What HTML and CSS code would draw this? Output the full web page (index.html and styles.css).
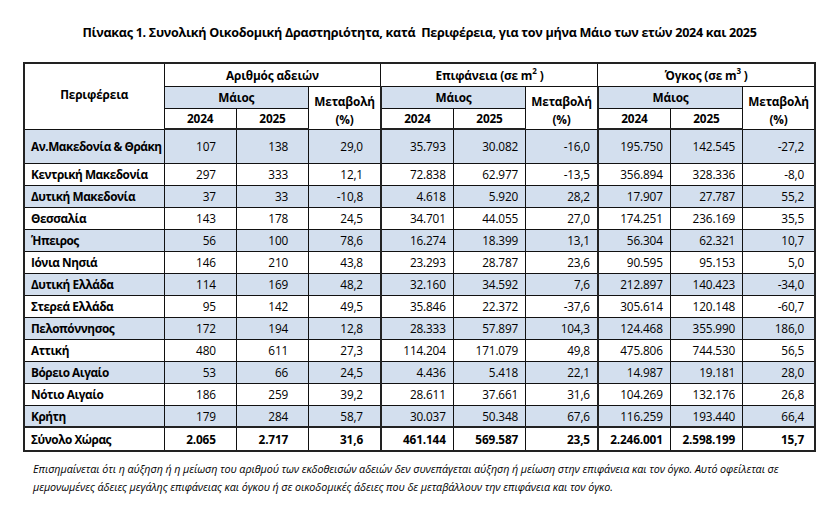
FILE: index.html
```html
<!DOCTYPE html>
<html lang="el">
<head>
<meta charset="utf-8">
<link rel="stylesheet" href="styles.css">
</head>
<body>
<div class="page">
  <h1 class="title">Πίνακας 1. Συνολική Οικοδομική Δραστηριότητα, κατά&nbsp; Περιφέρεια, για τον μήνα Μάιο των ετών 2024 και 2025</h1>
  <table class="data">
    <colgroup>
      <col class="c-reg"><col class="c-n"><col class="c-n"><col class="c-n"><col class="c-n"><col class="c-n"><col class="c-n"><col class="c-n"><col class="c-n"><col class="c-n">
    </colgroup>
    <thead>
      <tr class="h1">
        <th rowspan="3" class="reg-h">Περιφέρεια</th>
        <th colspan="3" class="grp">Αριθμός αδειών</th>
        <th colspan="3" class="grp">Επιφάνεια (σε m<sup>2</sup> )</th>
        <th colspan="3" class="grp">Όγκος (σε m<sup>3</sup> )</th>
      </tr>
      <tr class="h2">
        <th colspan="2" class="blue">Μάιος</th>
        <th rowspan="2" class="chg grp-r">Μεταβολή<br>(%)</th>
        <th colspan="2" class="blue">Μάιος</th>
        <th rowspan="2" class="chg grp-r">Μεταβολή<br>(%)</th>
        <th colspan="2" class="blue">Μάιος</th>
        <th rowspan="2" class="chg">Μεταβολή<br>(%)</th>
      </tr>
      <tr class="h3">
        <th>2024</th><th>2025</th>
        <th>2024</th><th>2025</th>
        <th>2024</th><th>2025</th>
      </tr>
    </thead>
    <tbody>
      <tr class="blue first"><th>Αν.Μακεδονία &amp; Θράκη</th><td class="a">107</td><td class="a">138</td><td class="p grp-r">29,0</td><td>35.793</td><td>30.082</td><td class="grp-r">-16,0</td><td>195.750</td><td>142.545</td><td class="l">-27,2</td></tr>
      <tr><th>Κεντρική Μακεδονία</th><td class="a">297</td><td class="a">333</td><td class="p grp-r">12,1</td><td>72.838</td><td>62.977</td><td class="grp-r">-13,5</td><td>356.894</td><td>328.336</td><td class="l">-8,0</td></tr>
      <tr class="blue"><th>Δυτική Μακεδονία</th><td class="a">37</td><td class="a">33</td><td class="p grp-r">-10,8</td><td>4.618</td><td>5.920</td><td class="grp-r">28,2</td><td>17.907</td><td>27.787</td><td class="l">55,2</td></tr>
      <tr><th>Θεσσαλία</th><td class="a">143</td><td class="a">178</td><td class="p grp-r">24,5</td><td>34.701</td><td>44.055</td><td class="grp-r">27,0</td><td>174.251</td><td>236.169</td><td class="l">35,5</td></tr>
      <tr class="blue"><th>Ήπειρος</th><td class="a">56</td><td class="a">100</td><td class="p grp-r">78,6</td><td>16.274</td><td>18.399</td><td class="grp-r">13,1</td><td>56.304</td><td>62.321</td><td class="l">10,7</td></tr>
      <tr><th>Ιόνια Νησιά</th><td class="a">146</td><td class="a">210</td><td class="p grp-r">43,8</td><td>23.293</td><td>28.787</td><td class="grp-r">23,6</td><td>90.595</td><td>95.153</td><td class="l">5,0</td></tr>
      <tr class="blue"><th>Δυτική Ελλάδα</th><td class="a">114</td><td class="a">169</td><td class="p grp-r">48,2</td><td>32.160</td><td>34.592</td><td class="grp-r">7,6</td><td>212.897</td><td>140.423</td><td class="l">-34,0</td></tr>
      <tr><th>Στερεά Ελλάδα</th><td class="a">95</td><td class="a">142</td><td class="p grp-r">49,5</td><td>35.846</td><td>22.372</td><td class="grp-r">-37,6</td><td>305.614</td><td>120.148</td><td class="l">-60,7</td></tr>
      <tr class="blue"><th>Πελοπόννησος</th><td class="a">172</td><td class="a">194</td><td class="p grp-r">12,8</td><td>28.333</td><td>57.897</td><td class="grp-r">104,3</td><td>124.468</td><td>355.990</td><td class="l">186,0</td></tr>
      <tr><th>Αττική</th><td class="a">480</td><td class="a">611</td><td class="p grp-r">27,3</td><td>114.204</td><td>171.079</td><td class="grp-r">49,8</td><td>475.806</td><td>744.530</td><td class="l">56,5</td></tr>
      <tr class="blue"><th>Βόρειο Αιγαίο</th><td class="a">53</td><td class="a">66</td><td class="p grp-r">24,5</td><td>4.436</td><td>5.418</td><td class="grp-r">22,1</td><td>14.987</td><td>19.181</td><td class="l">28,0</td></tr>
      <tr><th>Νότιο Αιγαίο</th><td class="a">186</td><td class="a">259</td><td class="p grp-r">39,2</td><td>28.611</td><td>37.661</td><td class="grp-r">31,6</td><td>104.269</td><td>132.176</td><td class="l">26,8</td></tr>
      <tr class="blue"><th>Κρήτη</th><td class="a">179</td><td class="a">284</td><td class="p grp-r">58,7</td><td>30.037</td><td>50.348</td><td class="grp-r">67,6</td><td>116.259</td><td>193.440</td><td class="l">66,4</td></tr>
      <tr class="total"><th>Σύνολο Χώρας</th><td class="a">2.065</td><td class="a">2.717</td><td class="p grp-r">31,6</td><td>461.144</td><td>569.587</td><td class="grp-r">23,5</td><td>2.246.001</td><td>2.598.199</td><td class="l">15,7</td></tr>
    </tbody>
  </table>
  <p class="note">Επισημαίνεται ότι η αύξηση ή η μείωση του αριθμού των εκδοθεισών αδειών δεν συνεπάγεται αύξηση ή μείωση στην επιφάνεια και τον όγκο. Αυτό οφείλεται σε μεμονωμένες άδειες μεγάλης επιφάνειας και όγκου ή σε οικοδομικές άδειες που δε μεταβάλλουν την επιφάνεια και τον όγκο.</p>
</div>
</body>
</html>
```

FILE: styles.css
```css
* { box-sizing: border-box; }
html, body { margin: 0; padding: 0; background: #fff; }
body { font-family: "Open Sans", "Noto Sans", sans-serif; color: #000; font-stretch: 90%; }
.page { width: 838px; padding: 25px 0 0 23px; }
.title {
  margin: 0;
  width: 793px;
  font-size: 12.6px;
  font-weight: bold;
  text-align: center;
  line-height: 16px;
  letter-spacing: -0.3px;
}
.data {
  margin-top: 21px;
  width: 793px;
  border-collapse: collapse;
  table-layout: fixed;
  border: 2px solid #222;
  font-size: 11.8px;
  letter-spacing: -0.15px;
}
.c-reg { width: 140px; }
.data th, .data td {
  border: 1px solid #111;
  padding: 0;
  height: 22px;
  line-height: 14px;
}
.data thead th { font-weight: bold; text-align: center; background: #fff; }
.data thead .h1 th { height: 23px; }
.data thead .h3 th { height: 21px; }
.data thead th.reg-h { vertical-align: middle; padding-bottom: 4px; }
.data thead th.chg { vertical-align: top; padding-top: 5px; line-height: 18px; }
.data thead th.blue { background: #d3dfee; }
.data sup { font-size: 8px; vertical-align: top; line-height: 8px; position: relative; top: -1px; }
.grp-r { border-right: 2px solid #222 !important; }
.data tbody th { text-align: left; font-weight: bold; padding-left: 6px; white-space: nowrap; letter-spacing: -0.45px; }
.data tbody td { text-align: right; padding-right: 7px; font-weight: normal; }
.data tbody td.a { padding-right: 20px; }
.data tbody td.p { padding-right: 17px; }
.data tbody td.l { padding-right: 10px; }
.data tbody tr.blue th, .data tbody tr.blue td { background: #d3dfee; }
.data tbody tr.first th, .data tbody tr.first td { height: 34px; }
.data thead tr.h3 th { border-bottom: 2px solid #222; }
.data tbody tr.total th, .data tbody tr.total td { font-weight: bold; height: 24px; border-top: 2px solid #222; }
.note {
  margin: 8px 0 0 10px;
  width: 790px;
  font-style: italic;
  font-size: 10.8px;
  line-height: 18px;
  letter-spacing: -0.1px;
}
```
